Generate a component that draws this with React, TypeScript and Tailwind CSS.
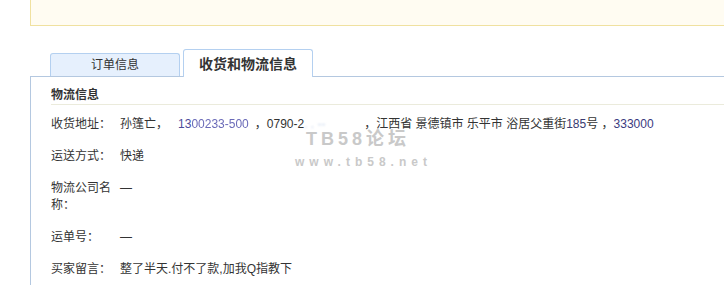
import React from "react";

const rows: { label: string; value: React.ReactNode }[] = [
  {
    label: "收货地址：",
    value: (
      <span className="whitespace-nowrap">
        孙篷亡，
        <span className="ml-[10px] text-[#4b4b9a]">
          13<span className="inline-block blur-[0.6px] text-[#6a6ab8]">00233-500</span>
        </span>
        <span className="ml-[6px]">，</span>0790-2<span className="inline-block w-[60px] blur-[0.8px] text-[#c8d4ec]">.   .     --</span>
        ，江西省 景德镇市 乐平市 浴居父重街<span className="text-[#3a3a70]">185</span>号 ，<span className="text-[#3a3a80]">333000</span>
      </span>
    ),
  },
  { label: "运送方式：", value: "快递" },
  { label: "物流公司名称：", value: "—" },
  { label: "运单号：", value: "—" },
  { label: "买家留言：", value: "整了半天.付不了款,加我Q指教下" },
];

export default function App() {
  return (
    <div
      className="relative h-[294px] overflow-hidden bg-white pl-[30px] text-[12px] text-[#333]"
      style={{ fontFamily: '"Liberation Sans", "Noto Sans CJK SC", sans-serif' }}
    >
      <div className="h-[26px] border-b border-l border-[#f0e1a0] bg-[#fffcf2]" />

      <div className="mt-[23px] flex items-end pl-[20px]">
        <div className="flex h-[23px] w-[130px] items-center justify-center rounded-t-[3px] border border-b-0 border-[#b4d0f0] bg-[#e6f0fd] text-[12px] leading-none">
          订单信息
        </div>
        <div className="relative z-10 -mb-px ml-[3px] flex h-[28px] w-[130px] items-center justify-center rounded-t-[3px] border border-b-0 border-[#b4d0f0] bg-white text-[14px] font-bold leading-none">
          收货和物流信息
        </div>
      </div>

      <div className="border-l border-t border-[#b4c8e0] pl-[20px]">
        <div className="border-b border-[#ebebdc] pt-[10px] font-bold leading-[17px]">物流信息</div>
        <div className="pt-[3px]">
          {rows.map((r) => (
            <div key={r.label} className="flex pb-[7px] pt-[8px] leading-[17px]">
              <div className="w-[69px] shrink-0 pr-[6px]">{r.label}</div>
              <div>{r.value}</div>
            </div>
          ))}
        </div>
      </div>

      <div className="pointer-events-none absolute left-[306px] top-[130px] select-none font-bold text-[#c9c9c9]">
        <div className="text-[18px] leading-[18px] tracking-[4px]">TB58论坛</div>
        <div className="-ml-[11px] mt-[8px] text-[12px] leading-[12px] tracking-[5px]">www.tb58.net</div>
      </div>
    </div>
  );
}
